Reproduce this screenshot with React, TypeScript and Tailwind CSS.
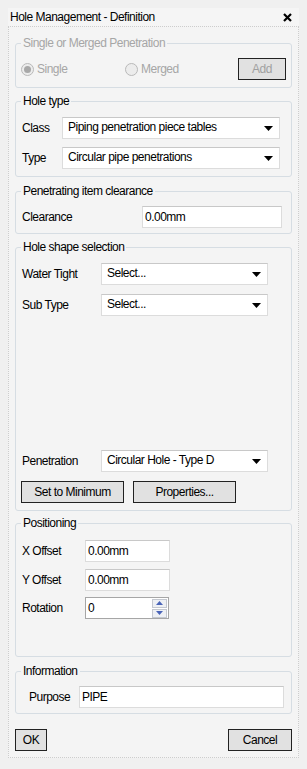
import React from 'react'

const font = { fontFamily: '"Liberation Sans", Arial, sans-serif' }

function Arrow() {
  return (
    <svg width="9" height="5" viewBox="0 0 9 5" className="shrink-0">
      <path d="M0 0H9L4.5 5Z" fill="#000" />
    </svg>
  )
}

function Select({ value, className }: { value: string; className: string }) {
  return (
    <div
      className={`h-[22px] bg-white border border-[#dcdcdc] border-t-[#c8c8c8] flex items-center justify-between pl-[5px] pr-[6px] ${className}`}
    >
      <span className="text-[12px] leading-none tracking-[-0.5px] text-black -mt-[3px]">{value}</span>
      <Arrow />
    </div>
  )
}

function TextInput({ value, className }: { value: string; className: string }) {
  return (
    <div className={`h-[22px] bg-white border border-[#dcdcdc] border-t-[#c8c8c8] flex items-center pl-[2px] ${className}`}>
      <span className="text-[12px] leading-none tracking-[-0.5px] text-black">{value}</span>
    </div>
  )
}

function Btn({ label, className, disabled }: { label: string; className: string; disabled?: boolean }) {
  return (
    <button
      className={`h-[22px] bg-[#e1e1e1] border border-[#222] text-[12px] leading-none tracking-[-0.5px] flex items-center justify-center ${disabled ? 'text-[#a0a0a0]' : 'text-black'} ${className}`}
    >
      {label}
    </button>
  )
}

function Group({
  title,
  className,
  children,
  disabled,
}: {
  title: string
  className: string
  children?: React.ReactNode
  disabled?: boolean
}) {
  return (
    <fieldset className={`border border-[#d6dde3] rounded-[3px] bg-[#f4f4f4] ${className}`}>
      <legend
        className={`ml-[5px] px-[2px] text-[12px] leading-[14px] tracking-[-0.5px] ${disabled ? 'text-[#a6a6a6]' : 'text-black'}`}
      >
        {title}
      </legend>
      {children}
    </fieldset>
  )
}

function Radio({ checked }: { checked?: boolean }) {
  return (
    <span className="w-[13px] h-[13px] rounded-full border border-[#b9b9b9] bg-[#ececec] flex items-center justify-center shrink-0">
      {checked && <span className="w-[7px] h-[7px] rounded-full bg-[#a8a8a8]" />}
    </span>
  )
}

function Row({
  label,
  labelW,
  children,
  className,
}: {
  label: string
  labelW: string
  children: React.ReactNode
  className?: string
}) {
  return (
    <div className={`flex items-center ${className ?? ''}`}>
      <span className={`text-[12px] leading-none tracking-[-0.5px] text-black shrink-0 ${labelW}`}>{label}</span>
      {children}
    </div>
  )
}

export default function App() {
  return (
    <div className="w-[307px] h-[769px] bg-[#f0f0f0] pt-[8px] px-[8px]" style={font}>
      {/* Title bar */}
      <div className="h-[18px] bg-[#f5f5f5] flex items-center justify-between pl-[2px] pr-[7px]">
        <span className="text-[12px] leading-none tracking-[-0.5px] text-black">Hole Management - Definition</span>
        <svg width="9" height="9" viewBox="0 0 9 9">
          <path d="M1 1L8 8M8 1L1 8" stroke="#000" strokeWidth="2.2" />
        </svg>
      </div>

      {/* Body */}
      <div className="h-[732px] border border-dotted border-[#cdcdcd] bg-[#f4f4f4] pl-[6px] pr-[6px] pt-[9px]">
        <Group title="Single or Merged Penetration" className="h-[52px]" disabled>
          <div className="flex items-center pl-[5px] pr-[5px] mt-[8px]">
            <Radio checked />
            <span className="ml-[3px] text-[12px] leading-none tracking-[-0.5px] text-[#a6a6a6] w-[88px]">Single</span>
            <Radio />
            <span className="ml-[3px] text-[12px] leading-none tracking-[-0.5px] text-[#a6a6a6]">Merged</span>
            <Btn label="Add" className="ml-auto w-[48px]" disabled />
          </div>
        </Group>

        <Group title="Hole type" className="h-[83px] mt-[6px]">
          <Row label="Class" labelW="w-[40px]" className="pl-[6px] mt-[9px]">
            <Select value="Piping penetration piece tables" className="w-[218px]" />
          </Row>
          <Row label="Type" labelW="w-[40px]" className="pl-[6px] mt-[8px]">
            <Select value="Circular pipe penetrations" className="w-[218px]" />
          </Row>
        </Group>

        <Group title="Penetrating item clearance" className="h-[50px] mt-[7px]">
          <Row label="Clearance" labelW="w-[120px]" className="pl-[6px] mt-[8px]">
            <TextInput value="0.00mm" className="w-[140px]" />
          </Row>
        </Group>

        <Group title="Hole shape selection" className="h-[271px] mt-[6px]">
          <Row label="Water Tight" labelW="w-[79px]" className="pl-[6px] mt-[9px]">
            <Select value="Select..." className="w-[167px]" />
          </Row>
          <Row label="Sub Type" labelW="w-[79px]" className="pl-[6px] mt-[9px]">
            <Select value="Select..." className="w-[167px]" />
          </Row>
          <Row label="Penetration" labelW="w-[79px]" className="pl-[6px] mt-[134px]">
            <Select value="Circular Hole - Type D" className="w-[167px]" />
          </Row>
          <div className="flex pl-[5px] mt-[9px] gap-[9px]">
            <Btn label="Set to Minimum" className="w-[103px]" />
            <Btn label="Properties..." className="w-[103px]" />
          </div>
        </Group>

        <Group title="Positioning" className="h-[141px] mt-[5px]">
          <Row label="X Offset" labelW="w-[63px]" className="pl-[6px] mt-[10px]">
            <TextInput value="0.00mm" className="w-[85px]" />
          </Row>
          <Row label="Y Offset" labelW="w-[63px]" className="pl-[6px] mt-[7px]">
            <TextInput value="0.00mm" className="w-[85px]" />
          </Row>
          <Row label="Rotation" labelW="w-[63px]" className="pl-[6px] mt-[6px]">
            <div className="w-[84px] h-[22px] bg-white border border-[#a6a6a6] flex items-center justify-between pl-[2px] pr-[1px]">
              <span className="text-[12px] leading-none text-black">0</span>
              <div className="flex flex-col gap-[1px]">
                <div className="w-[15px] h-[9px] bg-[#eef0f4] border border-[#c4c8d0] flex items-center justify-center">
                  <svg width="7" height="4" viewBox="0 0 7 4">
                    <path d="M0 4H7L3.5 0Z" fill="#4a64b8" />
                  </svg>
                </div>
                <div className="w-[15px] h-[9px] bg-[#eef0f4] border border-[#c4c8d0] flex items-center justify-center">
                  <svg width="7" height="4" viewBox="0 0 7 4">
                    <path d="M0 0H7L3.5 4Z" fill="#4a64b8" />
                  </svg>
                </div>
              </div>
            </div>
          </Row>
        </Group>

        <Group title="Information" className="h-[50px] mt-[7px]">
          <Row label="Purpose" labelW="w-[50px]" className="pl-[13px] mt-[8px]">
            <TextInput value="PIPE" className="w-[205px]" />
          </Row>
        </Group>

        <div className="flex justify-between mt-[15px]">
          <Btn label="OK" className="w-[32px]" />
          <Btn label="Cancel" className="w-[64px]" />
        </div>
      </div>
    </div>
  )
}
